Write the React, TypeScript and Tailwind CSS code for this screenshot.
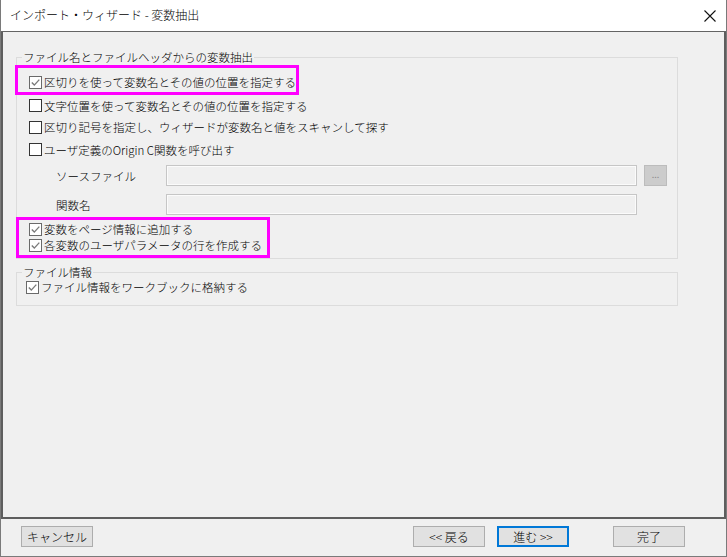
import { ReactNode } from "react";

const font = { fontFamily: '"Noto Sans CJK JP", "Noto Sans", sans-serif' };

function Box({ checked }: { checked?: boolean }) {
  return (
    <span
      className={`w-[13px] h-[13px] shrink-0 border bg-white flex items-center justify-center ${
        checked ? "border-[#6a6a6a]" : "border-[#333333]"
      }`}
    >
      {checked && (
        <svg width="11" height="11" viewBox="0 0 11 11" fill="none">
          <path d="M1.8 5.6 L4.3 8.1 L9.3 2.6" stroke="#7a7a7a" strokeWidth="1.4" />
        </svg>
      )}
    </span>
  );
}

function Check({ checked, label, className = "" }: { checked?: boolean; label: ReactNode; className?: string }) {
  return (
    <div className={`flex items-center gap-[2px] text-[11.5px] font-light text-black ${className}`}>
      <Box checked={checked} />
      <span className="leading-[16px] whitespace-nowrap">{label}</span>
    </div>
  );
}

function Field({ label, browse }: { label: string; browse?: boolean }) {
  return (
    <div className="flex items-center pl-[39px]">
      <span className="w-[110px] text-[11.5px] font-light leading-[16px]">{label}</span>
      <div className="w-[471px] h-[21px] border border-[#c6c6c6] bg-[#f0f0f0] shadow-[inset_0_0_0_1px_#fbfbfb]" />
      {browse && (
        <div className="ml-[7px] w-[23px] h-[21px] border border-[#bcbcbc] bg-[#cccccc] flex items-center justify-center text-[9px] text-[#8a8a8a] leading-none pb-[2px]">
          ...
        </div>
      )}
    </div>
  );
}

function Btn({ children, primary, className = "" }: { children: ReactNode; primary?: boolean; className?: string }) {
  return (
    <button
      className={`w-[72px] h-[21px] bg-[#e1e1e1] text-[12px] font-light leading-none text-black flex items-center justify-center ${
        primary ? "border-2 border-[#0078d7]" : "border border-[#adadad]"
      } ${className}`}
    >
      {children}
    </button>
  );
}

export default function App() {
  return (
    <div className="w-[727px] h-[557px] bg-[#f0f0f0] flex flex-col border-l border-r border-b border-[#7a7a7a] overflow-hidden" style={font}>
      {/* title bar */}
      <div className="h-[32px] shrink-0 bg-white border-b border-[#646464] flex items-center justify-between pl-[9px] pr-[10px]">
        <span className="text-[12px] font-light text-black leading-none pb-[1px]">インポート・ウィザード - 変数抽出</span>
        <svg width="12" height="12" viewBox="0 0 12 12" fill="none">
          <path d="M0.5 0.5 L11.5 11.5 M11.5 0.5 L0.5 11.5" stroke="#111" strokeWidth="1.1" />
        </svg>
      </div>

      {/* page */}
      <div className="h-[487px] shrink-0 border-l-2 border-r-2 border-b-2 border-[#5e5e5e] pt-[17px] pl-[13px]">
        <fieldset className="w-[662px] border border-[#dcdcdc] p-0 m-0">
          <legend className="ml-[5px] px-[1px] text-[11.5px] font-light leading-[16px]">ファイル名とファイルヘッダからの変数抽出</legend>
          <div className="flex flex-col">
            <div className="-ml-[2px] w-[284px] h-[30px] border-[3px] border-[#ff00ff] pl-[11px] pt-[6px]">
              <Check checked label="区切りを使って変数名とその値の位置を指定する" />
            </div>
            <div className="h-[21px] flex items-center pl-[12px]">
              <Check label="文字位置を使って変数名とその値の位置を指定する" />
            </div>
            <div className="h-[22.5px] flex items-center pl-[12px]">
              <Check label="区切り記号を指定し、ウィザードが変数名と値をスキャンして探す" />
            </div>
            <div className="h-[22.5px] flex items-center pl-[12px]">
              <Check label="ユーザ定義のOrigin C関数を呼び出す" />
            </div>
            <div className="mt-[4px]">
              <Field label="ソースファイル" browse />
            </div>
            <div className="mt-[8px]">
              <Field label="関数名" />
            </div>
            <div className="mt-[2px] -ml-px w-[254px] h-[41px] border-[3px] border-[#ff00ff] pl-[10px] pt-[1px]">
              <Check checked label="変数をページ情報に追加する" />
              <Check checked label="各変数のユーザパラメータの行を作成する" />
            </div>
          </div>
        </fieldset>

        <fieldset className="mt-[5px] w-[662px] border border-[#dcdcdc] p-0 m-0 pb-[10px]">
          <legend className="ml-[5px] px-[1px] text-[11.5px] font-light leading-[16px]">ファイル情報</legend>
          <div className="pl-[9px] -mt-px">
            <Check checked label="ファイル情報をワークブックに格納する" />
          </div>
        </fieldset>
      </div>

      {/* buttons */}
      <div className="flex-1 flex items-start pt-[7px]">
        <Btn className="ml-[20px]">キャンセル</Btn>
        <Btn className="ml-[320px]">&lt;&lt; 戻る</Btn>
        <Btn primary className="ml-[12px]">進む &gt;&gt;</Btn>
        <Btn className="ml-[44px]">完了</Btn>
      </div>
    </div>
  );
}
